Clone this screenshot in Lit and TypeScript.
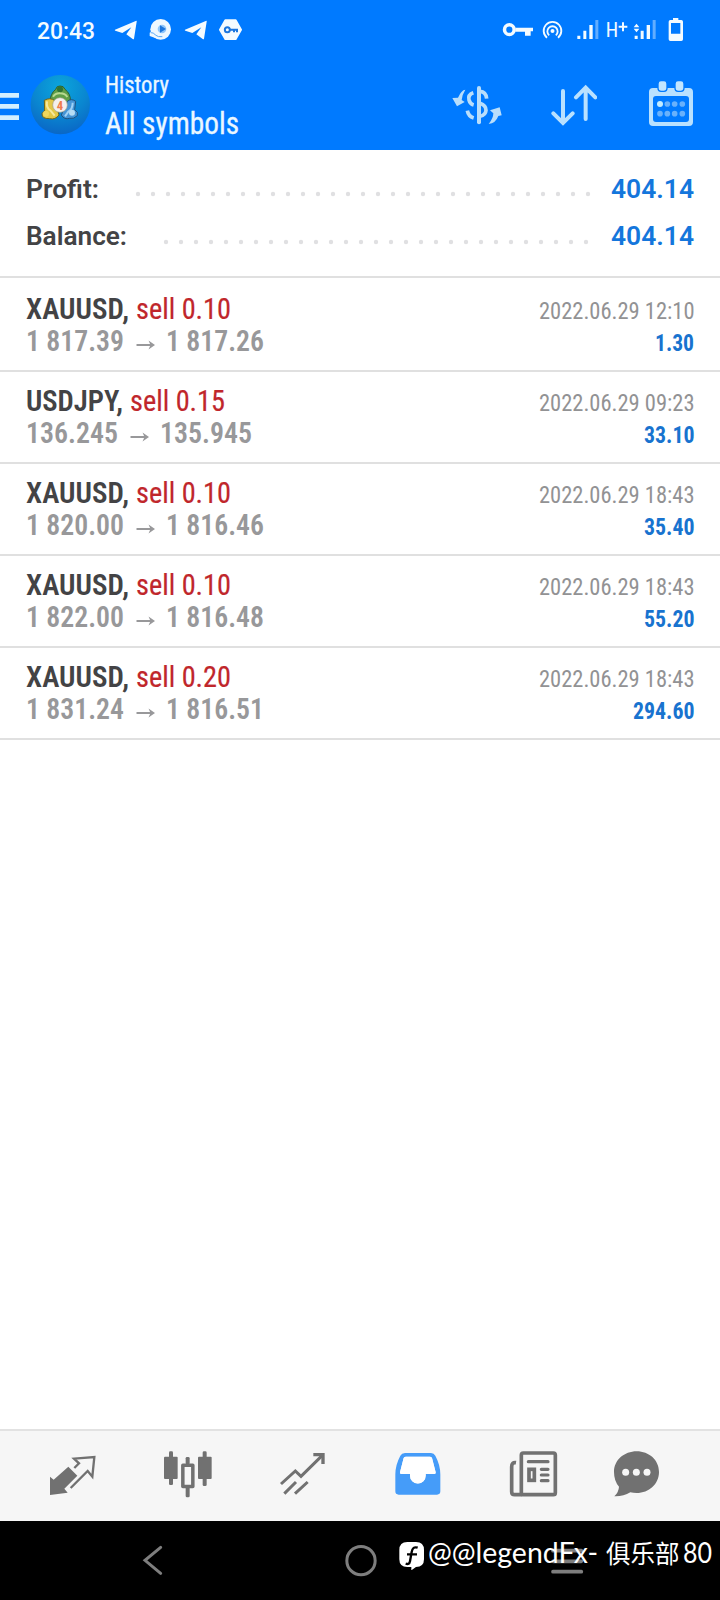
import { LitElement, html, svg, css } from "lit";
import { customElement } from "lit/decorators.js";

// Icon artwork is drawn on a grid of three units per CSS pixel.
const icon = (x: number, y: number, w: number, h: number, body: unknown, cls = "") =>
  html`<svg class="ic ${cls}" width=${w / 3} height=${h / 3} viewBox="${x} ${y} ${w} ${h}">${body}</svg>`;

// One line of text fitted to an exact advance width.
const fit = (text: string, width: number, height: number, base: number, cls: string) =>
  html`<svg class="fit" width=${width} height=${height}><text class=${cls} x="0" y=${base} textLength=${width} lengthAdjust="spacingAndGlyphs">${text}</text></svg>`;

interface Deal {
  symbol: string; symbolW: number; side: string;
  open: string; close: string; priceW: number;
  time: string; profit: string; profitW: number;
}

const deals: Deal[] = [
  { symbol: "XAUUSD,", symbolW: 103, side: "sell 0.10", open: "1 817.39", close: "1 817.26", priceW: 98, time: "2022.06.29 12:10", profit: "1.30", profitW: 39 },
  { symbol: "USDJPY,", symbolW: 97, side: "sell 0.15", open: "136.245", close: "135.945", priceW: 92, time: "2022.06.29 09:23", profit: "33.10", profitW: 50.5 },
  { symbol: "XAUUSD,", symbolW: 103, side: "sell 0.10", open: "1 820.00", close: "1 816.46", priceW: 98, time: "2022.06.29 18:43", profit: "35.40", profitW: 50.5 },
  { symbol: "XAUUSD,", symbolW: 103, side: "sell 0.10", open: "1 822.00", close: "1 816.48", priceW: 98, time: "2022.06.29 18:43", profit: "55.20", profitW: 50.5 },
  { symbol: "XAUUSD,", symbolW: 103, side: "sell 0.20", open: "1 831.24", close: "1 816.51", priceW: 98, time: "2022.06.29 18:43", profit: "294.60", profitW: 61.5 },
];

const plane = (dx: number) => svg`<g transform="translate(${dx} 0)"><path fill="#f4fbff" d="M345 89 L409 62 Q411 62 410 65 L402 116 Q401 119 398 117 L379 103 L394 82 L367 99 L346 92 Q343 90 345 89 Z"/></g>`;

const dots = (x: number, n: number) =>
  svg`${Array.from({ length: n }, (_, i) => svg`<circle cx=${x + i * 15} cy="4" r="2.2" fill="#e0e0e2"/>`)}`;

@customElement("app-root")
export class AppRoot extends LitElement {
  static styles = css`
    :host { display: block; width: 720px; height: 1600px; background: #fff; font-family: Roboto, sans-serif; }
    svg { display: block; flex: none; }
    .fit { overflow: visible; }
    text { font-family: "Roboto Condensed", Roboto, sans-serif; font-stretch: 75%; }
    .screen { display: flex; flex-direction: column; height: 1600px; position: relative; overflow: hidden; }
    .head { background: #007aff; height: 150px; flex: none; }
    .status { height: 60px; display: flex; align-items: center; padding-left: 37px; }
    .apps { display: flex; gap: 11px; margin-left: 19px; }
    .net { display: flex; margin-left: 259px; }
    .m8 { margin-left: 8px; } .m13 { margin-left: 13.33px; } .m7 { margin-left: 7.33px; }
    .m5 { margin-left: 5.33px; } .m11 { margin-left: 11.33px; }
    .bar { height: 90px; display: flex; align-items: center; }
    .m10 { margin-left: 11px; }
    .titles { margin-left: 14px; width: 347px; height: 90px; display: flex; flex-direction: column; }
    .tools { display: flex; align-items: center; gap: 48.67px; }
    .clock { font-family: Roboto; font-stretch: normal; font-size: 23px; font-weight: 500; fill: #f4fbff; }
    .small { font-size: 24px; fill: #eaf7ff; stroke: #eaf7ff; stroke-width: .3px; }
    .big { font-size: 32px; fill: #eaf7ff; stroke: #eaf7ff; stroke-width: .3px; }
    .hp { font-size: 60px; fill: #f4fbff; font-weight: 400; }
    .sum { height: 126px; box-sizing: border-box; padding: 16px 26px 0 26px; display: flex; flex-direction: column; gap: 1px; flex: none; }
    .line { height: 46px; display: flex; align-items: flex-start; }
    .leader.a { margin: 24px 19.500px 0 34.500px; }
    .leader.b { margin: 24.500px 21.500px 0 34.500px; }
    .lbl, .val { font-family: Roboto; font-stretch: normal; font-size: 26px; font-weight: 600; fill: #434345; }
    .val { fill: #1476dc; font-weight: 600; }
    .row { height: 92px; box-sizing: border-box; border-top: 2px solid #e0e0e0; padding: 10px 26px 0 26px; display: flex; justify-content: space-between; flex: none; }
    .row.first { height: 94px; padding-top: 12px; }
    .left { display: flex; flex-direction: column; }
    .right { display: flex; flex-direction: column; align-items: flex-end; }
    .pair { display: flex; }
    .pair.top { gap: 7px; }
    .pair.price { gap: 11.500px; }
    .sym { font-size: 29px; font-weight: 600; fill: #434345; }
    .side { font-size: 29.500px; fill: #c0262b; stroke: #c0262b; stroke-width: .2px; }
    .px { font-size: 29.500px; font-weight: 650; fill: #98989a; }
    .time { font-size: 24px; fill: #929294; }
    .gain { font-size: 24px; font-weight: 700; fill: #1873cf; }
    .blank { flex: 1; border-top: 2px solid #e0e0e0; }
    .tabs { height: 92px; box-sizing: border-box; border-top: 2px solid #e2e2e2; background: #f6f6f6; display: flex; gap: 65px; padding: 19px 0 0 47.67px; flex: none; }
    .last { margin-left: -12px; }
    .nav { height: 79px; background: #000; display: flex; align-items: center; padding-left: 142px; flex: none; box-sizing: border-box; }
    .home { margin-left: 180.500px; } .recent { margin-left: 173.500px; }
    .mark { position: absolute; left: 399px; top: 1538px; display: flex; align-items: flex-start; }
    .wm { font-family: Lato, "Noto Sans CJK SC", sans-serif; font-stretch: normal; font-size: 28px; font-weight: 400; fill: #fff; }
    .cjk { font-family: "Noto Sans CJK SC", sans-serif; font-stretch: normal; font-size: 25px; fill: #fff; }
    .g5 { margin-left: 3.500px; } .g8 { margin-left: 8px; } .g2 { margin-left: 3.500px; }
  `;

  private header() {
    return html`<div class="head">
      <div class="status">
        ${fit("20:43", 58, 24, 21, "clock")}
        <div class="apps">
          ${icon(342, 54, 72, 72, plane(0))}
          ${icon(447, 54, 72, 72, svg`<circle cx="482" cy="88" r="31" fill="#eef8ff"/><path fill="#eef8ff" d="M456 92L449 98V108L466 114Z"/>
            <circle cx="486" cy="87" r="13" fill="#8fc6fa"/><path d="M480 76L498 87L480 98Z" fill="#1c76dd"/>
            <path d="M452 98Q462 97 466 105Q474 112 487 110" fill="none" stroke="#5aa9f5" stroke-width="3"/>`)}
          ${icon(552, 54, 72, 72, plane(210))}
          ${icon(657, 54, 72, 72, svg`<path fill="#f4fbff" stroke="#f4fbff" stroke-width="6" stroke-linejoin="round" d="M676 61 H707 L723 89 L707 117 H676 L660 89Z"/>
            <circle cx="682" cy="89" r="7.5" fill="none" stroke="#1c76dd" stroke-width="6"/><path d="M689 89 H711 V97 M702 89 V97" fill="none" stroke="#1c76dd" stroke-width="6"/>`)}
        </div>
        <div class="net">
          ${icon(216, 54, 96, 72, svg`<circle cx="238" cy="89" r="14.5" fill="none" stroke="#f4fbff" stroke-width="10.5"/><path d="M256 83 H309 V94 H302 V107 H285 V95 H256Z" fill="#f4fbff"/>`)}
          ${icon(336, 54, 64, 72, svg`<circle cx="367.500" cy="93" r="6" fill="#f4fbff"/><g fill="none" stroke="#f4fbff" stroke-width="5.500"><path d="M357.500 106 A15.500 15.500 0 1 1 377.500 106"/><path d="M351 113 A26.500 26.500 0 1 1 384 113"/></g>`, "m8")}
          ${icon(440, 54, 66, 72, svg`<g fill="#f4fbff"><path d="M441 107h9v10h-9zM459 92h9v25h-9zM477 75h10v42h-10z"/><path opacity=".4" d="M495 60h9v57h-9z"/></g>`, "m13")}
          ${icon(528, 54, 66, 72, svg`<text class="hp" x="527" y="110">H</text><path d="M579 67v27M566 80.500h26" stroke="#f4fbff" stroke-width="6"/>`, "m7")}
          ${icon(610, 54, 70, 72, svg`<g fill="#f4fbff"><path d="M615 107h9v10h-9zM633 92h9v25h-9zM651 75h10v42h-10z"/><path opacity=".4" d="M669 60h9v57h-9z"/><path d="M612 82L620.500 71L629 82ZM612 86L620.500 97L629 86Z"/></g>`, "m5")}
          ${icon(714, 54, 48, 72, svg`<path fill="#f4fbff" fill-rule="evenodd" d="M729 54h16v6h9q5 0 5 5v53q0 5-5 5h-33q-5 0-5-5v-53q0-5 5-5h8zM723 69v32h28v-32z"/>`, "m11")}
        </div>
      </div>
      <div class="bar">
        ${icon(0, 267, 57, 96, svg`<path fill="#d3efff" d="M0 279h57v14h-57zM0 312h57v14h-57zM0 346h57v14h-57z"/>`)}
        ${icon(90, 222, 183, 186, svg`
          <defs><radialGradient id="disc" cx=".5" cy=".2" r=".85"><stop offset="0" stop-color="#0ba5dc"/><stop offset=".55" stop-color="#0a86d0"/><stop offset="1" stop-color="#0a62c4"/></radialGradient></defs>
          <circle cx="181" cy="314" r="89" fill="url(#disc)"/>
          <g stroke-linejoin="round">
            <path d="M167 268Q170 257 180 258Q191 257 195 268Q213 282 211 304L205 312H156L150 304Q151 281 167 268Z" fill="#5f9f48" stroke="#2a5f35" stroke-width="3"/>
            <circle cx="180" cy="268" r="9" fill="#2f7434"/>
            <path d="M159 290Q166 279 180 280Q195 280 202 291" fill="none" stroke="#b9d991" stroke-width="6"/>
            <path d="M133 301Q150 291 165 302L177 345Q166 360 149 356Q125 357 126 341Q128 336 134 333Z" fill="#e2c746" stroke="#6b641d" stroke-width="3"/>
            <path d="M141 304Q138 324 151 331L164 347" fill="none" stroke="#f6e89b" stroke-width="6"/>
            <circle cx="138" cy="341" r="9" fill="#f0d75d"/>
            <path d="M184 345L202 304Q214 294 227 304L224 329Q236 336 232 347Q221 358 209 355Q193 360 184 345Z" fill="#4595d6" stroke="#1f527f" stroke-width="3"/>
            <path d="M218 308Q218 327 205 335L195 349" fill="none" stroke="#9ed1f5" stroke-width="6"/>
            <circle cx="216" cy="338" r="9" fill="#b7ddf4"/>
            <circle cx="180" cy="315" r="22" fill="#f4f0ec" stroke="#9fa28c" stroke-width="2"/>
          </g>
          <text x="170" y="329" font-size="38" font-weight="700" fill="#ee7c4c">4</text>`, "m10")}
        <div class="titles">
          ${fit("History", 64, 52, 33, "small")}
          ${fit("All symbols", 134, 38, 21.6, "big")}
        </div>
        <div class="tools">
          ${icon(66, 243, 150, 140, svg`<g fill="none" stroke="#b9defb" stroke-width="11">
            <path d="M147 261V364" stroke-width="12" stroke-linecap="round"/><path d="M170 293Q168 272 150 271"/><path d="M130 275Q113 281 117 297Q120 309 131 312"/><path d="M150 307Q168 313 168 328Q167 342 150 346" /><path d="M112 329Q115 346 131 351"/></g>
            <g fill="#b9defb"><path d="M106 266Q94 267 84 290L67 291L81 316L104 303L95 297Q96 282 106 266Z"/><path d="M176 369Q197 367 205 345L215 343L209 319L180 328L190 337Q190 352 176 369Z"/></g>`)}
          ${icon(362, 244, 140, 140, svg`<g fill="none" stroke="#b9e1ff" stroke-width="12" stroke-linecap="round" stroke-linejoin="miter"><path d="M398 271V366M369 338L398 367L427 338"/><path d="M466 355V261M437 290L466 261L495 290"/></g>`)}
          ${icon(648, 240, 145, 150, svg`<path fill="#b9e1ff" fill-rule="evenodd" d="M669 264h108q12 0 12 12v90q0 12-12 12h-108q-12 0-12-12v-90q0-12 12-12zM678 288q-9 0-9 9v60q0 9 9 9h90q9 0 9-9v-60q0-9-9-9z"/>
            <g fill="#c3e6ff" stroke="#007aff" stroke-width="4"><rect x="684" y="242" width="27" height="32" rx="9"/><rect x="735" y="242" width="27" height="32" rx="9"/></g>
            <circle cx="690" cy="312" r="9" fill="#c3ecff"/>
            <g fill="#69b1fb"><circle cx="712" cy="312" r="8.500"/><circle cx="734" cy="312" r="8.500"/><circle cx="757" cy="312" r="8.500"/><circle cx="690" cy="341" r="8.500"/><circle cx="712" cy="341" r="8.500"/><circle cx="734" cy="341" r="8.500"/><circle cx="757" cy="341" r="8.500"/></g>`)}
        </div>
      </div>
    </div>`;
  }

  private summary() {
    return html`<div class="sum">
      <div class="line">${fit("Profit:", 73, 40, 31.7, "lbl")}<svg class="leader a" width="458" height="8">${dots(4, 31)}</svg>${fit("404.14", 83, 40, 31.7, "val")}</div>
      <div class="line">${fit("Balance:", 101, 40, 31.7, "lbl")}<svg class="leader b" width="428" height="8">${dots(4, 29)}</svg>${fit("404.14", 83, 40, 31.7, "val")}</div>
    </div>`;
  }

  private deal(d: Deal, i: number) {
    return html`<div class="row ${i === 0 ? "first" : ""}">
      <div class="left">
        <div class="pair top">${fit(d.symbol, d.symbolW, 32, 29, "sym")}${fit(d.side, 95, 32, 29, "side")}</div>
        <div class="pair price">${fit(d.open, d.priceW, 32, 29, "px")}<svg width="19" height="32"><path d="M0.500 23H17" fill="none" stroke="#98989a" stroke-width="2"/><path d="M12.500 18.500L19 23L12.500 27.500L14.500 23Z" fill="#98989a"/></svg>${fit(d.close, d.priceW, 32, 29, "px")}</div>
      </div>
      <div class="right">${fit(d.time, 155.5, 32, 28.8, "time")}${fit(d.profit, d.profitW, 32, 28.8, "gain")}</div>
    </div>`;
  }

  private tabs() {
    return html`<div class="tabs">
      ${icon(143, 90, 150, 150, svg`<path fill="#717171" d="M149 170L160 179L204 140L231 167L192 206L202 218L149 225Z"/>
        <path fill="none" stroke="#717171" stroke-width="7" d="M211 204L262 153L276 170L282 111L221 116L236 130L222 144"/>`)}
      ${icon(488, 90, 150, 150, svg`<g fill="#717171"><rect x="491" y="110" width="41" height="67" rx="3"/><rect x="506" y="94" width="12" height="101" rx="4"/><rect x="593" y="110" width="41" height="67" rx="3"/><rect x="607" y="94" width="12" height="104" rx="4"/><rect x="556" y="111" width="12" height="22" rx="4"/><rect x="556" y="200" width="12" height="32" rx="4"/></g><rect x="547.500" y="135.500" width="30" height="64" fill="#f6f6f6" stroke="#717171" stroke-width="10.500" stroke-linejoin="round"/>`)}
      ${icon(833, 90, 150, 150, svg`<g fill="none" stroke="#717171" stroke-width="9"><path d="M842 192L885 153L902 169L966 106"/><path d="M939 104H968V132" stroke-width="10"/><path d="M852 221L887 186M884 221L922 186"/></g>`)}
      ${icon(98, 90, 150, 150, svg`<path fill="#459cf9" fill-rule="evenodd" d="M134 99H212Q221 99 225 107Q240 135 240 163V214Q240 224 230 224H115Q105 224 105 214V163Q105 135 120 107Q124 99 134 99ZM137 110Q132 110 130 114L119 157Q118 162 123 162H149V167A23 23 0 0 0 196 167V162H222Q227 162 226 157L215 114Q213 110 208 110Z"/><path fill="#fff" d="M137 110Q132 110 130 114L119 157Q118 162 123 162H149V167A23 23 0 0 0 196 167V162H222Q227 162 226 157L215 114Q213 110 208 110Z"/>`)}
      ${icon(443, 90, 150, 150, svg`<g fill="none" stroke="#717171" stroke-width="11"><rect x="483" y="99" width="102" height="125" rx="6"/><path d="M467 128Q454 126 454 140V215Q454 224 463 224H486"/><rect x="506" y="148" width="16" height="33"/><path d="M504 125H563M543 148H563M543 165H563M543 182H563" stroke-width="9.500" stroke-linecap="round"/></g>`)}
      ${icon(752, 90, 150, 150, svg`<path fill="#717171" d="M829 94C866 94 896 120 896 156C896 192 866 219 829 219Q819 219 810 217Q789 230 762 229Q775 217 776 200Q761 183 761 156C761 120 792 94 829 94Z"/><g fill="#f6f6f6"><circle cx="796" cy="157" r="10.500"/><circle cx="828" cy="157" r="10.500"/><circle cx="860" cy="157" r="10.500"/></g>`, "last")}
    </div>`;
  }

  private nav() {
    return html`<div class="nav">
      ${icon(426, 372, 66, 102, svg`<path d="M482 382L435 421L482 460" fill="none" stroke="#7e7e7e" stroke-width="9" stroke-linecap="round"/>`)}
      ${icon(1035, 372, 96, 102, svg`<circle cx="1083" cy="422" r="42.500" fill="none" stroke="#7e7e7e" stroke-width="9"/>`, "home")}
      ${icon(570, 372, 105, 102, svg`<path d="M579 392H664M579 424H664M579 455H664" fill="none" stroke="#7e7e7e" stroke-width="11" stroke-linecap="round"/>`, "recent")}
    </div>
    <div class="mark">
      ${icon(117, 356, 76, 97, svg`<path fill="#fff" d="M142 368H168Q192 368 192 392V420Q192 443 168 443L154 453V443H142Q118 443 118 420V392Q118 368 142 368Z"/><path d="M173 385Q158 380 155 398L150 426Q148 437 137 433M141 405H171" fill="none" stroke="#000" stroke-width="7"/>`)}
      <div class="g2">${fit("@@legendFx-", 170, 36, 25.3, "wm")}</div>
      <div class="g8">${fit("俱乐部", 73.5, 36, 25, "cjk")}</div>
      <div class="g5">${fit("80", 29, 36, 25.3, "wm")}</div>
    </div>`;
  }

  render() {
    return html`<div class="screen">
      ${this.header()}${this.summary()}${deals.map((d, i) => this.deal(d, i))}
      <div class="blank"></div>
      ${this.tabs()}${this.nav()}
    </div>`;
  }
}
